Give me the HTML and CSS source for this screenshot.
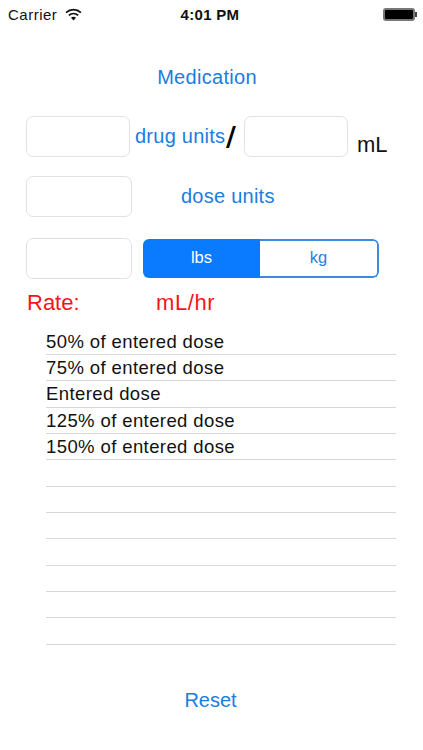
FILE: index.html
```html
<!DOCTYPE html>
<html lang="en">
<head>
    <meta charset="UTF-8">
    <meta name="viewport" content="width=device-width, initial-scale=1.0">
    <title>Medication Rate</title>
    <link rel="stylesheet" href="styles.css">
</head>
<body>
    <div class="screen">
        <div class="status-bar">
            <div class="status-left">
                <span class="carrier">Carrier</span>
                <svg class="wifi" width="17" height="13" viewBox="0 0 16 12">
                    <path d="M1 4.2C5 .6 11 .6 15 4.2" fill="none" stroke="#111" stroke-width="1.7"/>
                    <path d="M3.6 6.8C6.2 4.6 9.8 4.6 12.4 6.8" fill="none" stroke="#111" stroke-width="1.7"/>
                    <path d="M8 11.6 5.6 9C7 7.9 9 7.9 10.4 9Z" fill="#111"/>
                </svg>
            </div>
            <span class="clock">4:01 PM</span>
            <div class="battery">
                <div class="battery-body"></div>
                <div class="battery-tip"></div>
            </div>
        </div>

        <h1 class="title">Medication</h1>

        <div class="row row-drug">
            <input class="field field-drug" type="text">
            <span class="link drug-units">drug units</span>
            <span class="slash">/</span>
            <input class="field field-drug" type="text">
            <span class="ml">mL</span>
        </div>

        <div class="row row-dose">
            <input class="field" type="text">
            <span class="link dose-units">dose units</span>
        </div>

        <div class="row row-weight">
            <input class="field" type="text">
            <div class="segment">
                <div class="seg seg-on">lbs</div>
                <div class="seg">kg</div>
            </div>
        </div>

        <div class="rate">
            <span class="rate-label">Rate:</span>
            <span class="rate-unit">mL/hr</span>
        </div>

        <ul class="list">
            <li>50% of entered dose</li>
            <li>75% of entered dose</li>
            <li>Entered dose</li>
            <li>125% of entered dose</li>
            <li>150% of entered dose</li>
            <li></li>
            <li></li>
            <li></li>
            <li></li>
            <li></li>
            <li></li>
            <li></li>
        </ul>

        <div class="reset">Reset</div>
    </div>
</body>
</html>
```

FILE: styles.css
```css
* {
    margin: 0;
    padding: 0;
    box-sizing: border-box;
}

body {
    background: #fff;
    font-family: "Liberation Sans", Arial, sans-serif;
    overflow: hidden;
}

.screen {
    width: 423px;
    height: 750px;
    display: flex;
    flex-direction: column;
}

.status-bar {
    height: 28px;
    padding: 0 6px 0 8px;
    display: grid;
    grid-template-columns: 1fr auto 1fr;
    align-items: center;
    color: #111;
    font-size: 15px;
}

.status-left {
    display: flex;
    align-items: center;
    gap: 8px;
}

.carrier {
    letter-spacing: 0.5px;
}

.clock {
    font-weight: bold;
    letter-spacing: 0.3px;
    margin-left: -5px;
}

.battery {
    justify-self: end;
    display: flex;
    align-items: center;
}

.battery-body {
    width: 32px;
    height: 13px;
    background: #000;
    border: 2px solid #777;
    border-radius: 3px;
}

.battery-tip {
    width: 2px;
    height: 5px;
    background: #444;
}

.title {
    margin-top: 37px;
    padding-right: 9px;
    text-align: center;
    color: #1b7ce2;
    font-size: 20px;
    font-weight: normal;
    letter-spacing: 0.3px;
    line-height: 24px;
}

.row {
    display: flex;
    height: 41px;
    padding-left: 26px;
}

.row-drug {
    margin-top: 27px;
}

.row-dose {
    margin-top: 19px;
}

.row-weight {
    margin-top: 21px;
}

.field {
    width: 106px;
    height: 41px;
    border: 1px solid #e2e2e2;
    border-radius: 7px;
    background: #fff;
    outline: none;
}

.field-drug {
    width: 104px;
}

.link {
    color: #1b7ce2;
    font-size: 20px;
    letter-spacing: 0.25px;
    line-height: 41px;
}

.drug-units {
    margin-left: 5px;
    width: 91px;
    white-space: nowrap;
}

.slash {
    width: 18px;
    color: #000;
    font-family: "DejaVu Sans", sans-serif;
    font-size: 27px;
    font-weight: bold;
    line-height: 41px;
}

.ml {
    margin-left: 9px;
    color: #111;
    font-size: 22px;
    line-height: 26px;
    margin-top: 16px;
}

.dose-units {
    margin-left: 49px;
}

.segment {
    display: flex;
    width: 236px;
    height: 39px;
    margin-left: 11px;
    margin-top: 1px;
    border-radius: 6px;
    overflow: hidden;
}

.seg {
    flex: 1;
    display: flex;
    justify-content: center;
    align-items: center;
    border: 2px solid #3d8ae2;
    border-left: 0;
    border-radius: 0 6px 6px 0;
    color: #2a80e0;
    font-size: 16.5px;
    padding-bottom: 2px;
}

.seg-on {
    background: #0a7bff;
    border: 0;
    border-radius: 0;
    color: #fff;
}

.rate {
    display: flex;
    margin-top: 12px;
    padding-left: 27px;
    color: #f5141c;
    font-size: 22px;
    line-height: 24px;
}

.rate-label {
    width: 129px;
}

.rate-unit {
    letter-spacing: 0.6px;
}

.list {
    list-style: none;
    margin: 13.5px 27px 0 46px;
    display: grid;
    grid-auto-rows: 26.36px;
}

.list li {
    border-bottom: 1px solid #d8d8d8;
    color: #111;
    font-size: 18.5px;
    letter-spacing: 0.4px;
    line-height: 22px;
    padding-top: 2px;
    white-space: nowrap;
}

.reset {
    margin-top: 43.5px;
    padding-right: 2px;
    text-align: center;
    color: #1b7ce2;
    font-size: 20px;
    line-height: 24px;
}
```
